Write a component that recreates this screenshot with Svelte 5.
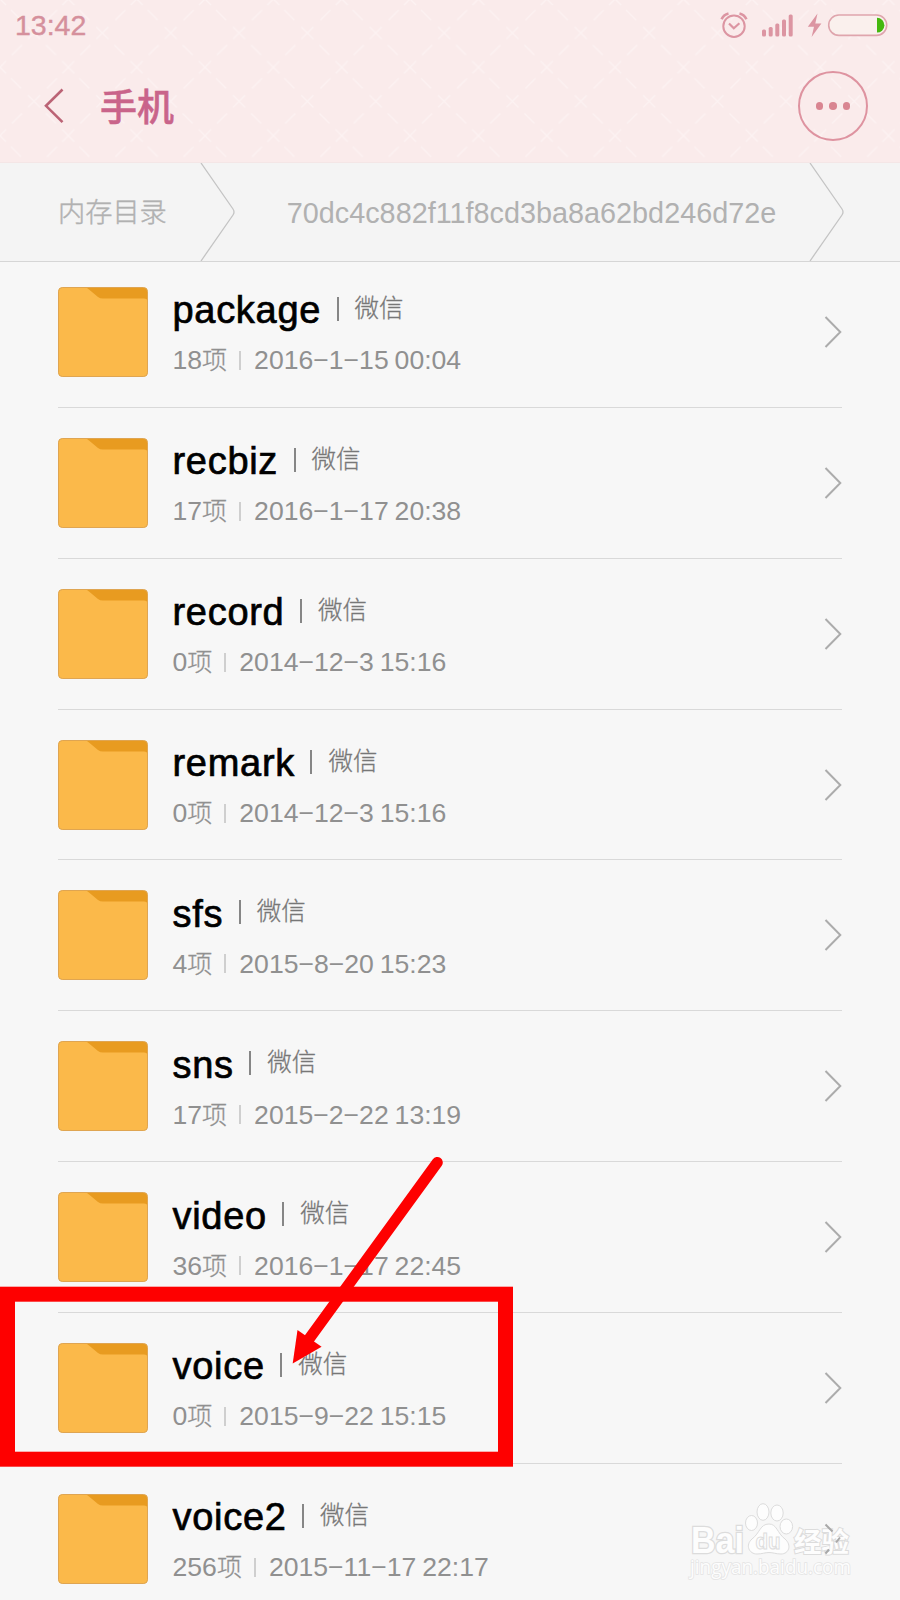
<script lang="ts">
  type Folder = { name: string; count: number; date: string };

  const app = '微信';
  const path = ['内存目录', '70dc4c882f11f8cd3ba8a62bd246d72e'];

  const folders: Folder[] = [
    { name: 'package', count: 18, date: '2016−1−15 00:04' },
    { name: 'recbiz', count: 17, date: '2016−1−17 20:38' },
    { name: 'record', count: 0, date: '2014−12−3 15:16' },
    { name: 'remark', count: 0, date: '2014−12−3 15:16' },
    { name: 'sfs', count: 4, date: '2015−8−20 15:23' },
    { name: 'sns', count: 17, date: '2015−2−22 13:19' },
    { name: 'video', count: 36, date: '2016−1−17 22:45' },
    { name: 'voice', count: 0, date: '2015−9−22 15:15' },
    { name: 'voice2', count: 256, date: '2015−11−17 22:17' },
  ];
</script>

<div class="screen">
  <header class="top">
    <svg class="lattice" width="900" height="162" aria-hidden="true">
      <defs>
        <pattern id="lattice" width="68.35" height="68.35" y="-1" patternUnits="userSpaceOnUse">
          <path
            d="M0 0l6 6M11 11l10 10M28 28l12 12M46 46l10 10M62 62l6.35 6.35M68.35 0l-6 6M57 11L47 21M40 28L28 40M22 46L12 56M6 62l-6 6.35"
            stroke="#fcf2f2" stroke-width="1.3" fill="none"
          />
        </pattern>
      </defs>
      <rect width="900" height="162" fill="url(#lattice)" />
    </svg>

    <div class="status">
      <span class="time">13:42</span>
      <svg class="status-icons" width="170" height="30" viewBox="0 0 170 30">
        <g fill="none" stroke="#dc95a2" stroke-width="2">
          <circle cx="14" cy="16.2" r="10.7" />
          <path d="M9 13.5l4.8 4.8 5.6-5" stroke-width="2.2" />
          <path d="M1.6 9.2Q3.5 4.5 8.5 3.4M26.4 9.2Q24.5 4.5 19.5 3.4" stroke-width="2.6" />
        </g>
        <g fill="#dc95a2">
          <rect x="42" y="19.5" width="4" height="7" rx="1.5" />
          <rect x="48.7" y="17" width="4" height="9.5" rx="1.5" />
          <rect x="55.3" y="13.5" width="4" height="13" rx="1.5" />
          <rect x="62" y="9.5" width="4" height="17" rx="1.5" />
          <rect x="68.7" y="4.5" width="4" height="22" rx="1.5" />
          <path d="M97.5 3.5L87.8 16.8h6.2L91.6 27l9.8-13.5h-6.1z" />
        </g>
        <rect x="108.7" y="5" width="58" height="20.4" rx="10.2" fill="#faf0ed" stroke="#dfa5ad" stroke-width="1.6" />
        <path d="M157 7.8a7.4 7.4 0 0 1 0 14.8z" fill="#45b80e" />
      </svg>
    </div>

    <div class="title-bar">
      <svg class="back" width="22" height="36" viewBox="0 0 22 36">
        <path d="M20.5 1.5L4 17.8 20.5 34.2" fill="none" stroke="#bb6375" stroke-width="2.6" />
      </svg>
      <h1>手机</h1>
      <button class="more" aria-label="more">
        <i></i><i></i><i></i>
      </button>
    </div>
  </header>

  <nav class="crumbs">
    {#each path as part}
      <span class="crumb">{part}</span>
      <svg class="crumb-edge" width="36" height="98" viewBox="0 0 36 98">
        <path d="M1 0l32 46q2 3 0 6L1 98" fill="none" stroke="#c4c4c4" stroke-width="1.3" />
      </svg>
    {/each}
  </nav>

  <ul class="list">
    {#each folders as folder}
      <li class="row">
        <svg class="folder" width="90" height="90" viewBox="0 0 90 90">
          <rect x=".5" y=".5" width="89" height="89" rx="4" fill="#e89b20" />
          <path
            d="M.5 4.5q0-4 4-4H27q2 0 4 2l9 7.5q2 1.5 5 1.5h41q3.5 0 3.5 3v71q0 4-4 4h-81q-4 0-4-4z"
            fill="#fbb94a"
          />
          <rect x=".5" y=".5" width="89" height="89" rx="4" fill="none" stroke="#dfa552" stroke-width="1" />
        </svg>
        <div class="info">
          <div class="line">
            <span class="name">{folder.name}</span>
            <span class="bar"></span>
            <span class="app">{app}</span>
          </div>
          <div class="meta">
            <span class="count">{folder.count}<span class="unit">项</span></span>
            <span class="bar small"></span>
            <span class="date">{folder.date}</span>
          </div>
        </div>
        <svg class="arrow" width="18" height="32" viewBox="0 0 18 32">
          <path d="M1.5 1L16.3 16 1.5 31" fill="none" stroke="#acacac" stroke-width="2" />
        </svg>
      </li>
    {/each}
  </ul>

  <svg class="overlay" width="900" height="1600" viewBox="0 0 900 1600">
    <g class="watermark">
      <text x="691" y="1553" class="wm-latin" textLength="53" lengthAdjust="spacingAndGlyphs">Bai</text>
      <ellipse cx="751.5" cy="1523" rx="6" ry="7.5" />
      <ellipse cx="763" cy="1512" rx="6" ry="8.3" />
      <ellipse cx="777" cy="1513" rx="6.2" ry="8" />
      <ellipse cx="786.3" cy="1526.5" rx="6.3" ry="7.5" />
      <path d="M769 1524c-9 0-9 9-17 15-7 6-3 15 5 15 5 0 8-1.5 12-1.5s7 1.5 12 1.5c8 0 11-9 4-15-8-6-8-15-16-15z" />
      <text x="755.5" y="1549" class="wm-du" textLength="25" lengthAdjust="spacingAndGlyphs">du</text>
      <text x="794" y="1551.5" class="wm-cjk">经验</text>
      <text x="690" y="1574" class="wm-url" textLength="161" lengthAdjust="spacingAndGlyphs">jingyan.baidu.com</text>
    </g>
    <path d="M825.5 1524.5l7 7M840 1537.5l-4 5M829 1549.5l-3.5 4" fill="none" stroke="#a8a8a8" stroke-width="2" />
    <rect x="7.5" y="1294.2" width="498" height="165" fill="none" stroke="#fe0000" stroke-width="15" />
    <path d="M437.3 1162.5L309 1339" stroke="#fe0000" stroke-width="11" stroke-linecap="round" />
    <path d="M292.7 1363.5l4.8-33.5 24.1 16.7z" fill="#fe0000" />
  </svg>
</div>

<style>
  :global(body) {
    margin: 0;
    background: #f7f7f7;
  }
  .screen {
    position: relative;
    width: 900px;
    height: 1600px;
    overflow: hidden;
    background: #f7f7f7;
    font-family: 'Liberation Sans', 'Noto Sans CJK SC', sans-serif;
  }
  .top {
    position: relative;
    height: 163px;
    background: #faebeb;
    border-bottom: 1px solid #f4e6e6;
    box-sizing: border-box;
  }
  .lattice {
    position: absolute;
    inset: 0;
  }
  .status {
    position: relative;
    display: flex;
    justify-content: space-between;
    height: 50px;
    padding: 0 10.5px 0 15px;
  }
  .time {
    font-size: 28.5px;
    line-height: 51px;
    color: #d5909c;
    -webkit-text-stroke: 0.4px #d5909c;
  }
  .status-icons {
    margin-top: 10px;
  }
  .title-bar {
    position: relative;
    display: flex;
    align-items: center;
    height: 112px;
    padding: 0 32px 0 42px;
  }
  h1 {
    margin: 0 auto 0 36px;
    padding-top: 5px;
    font-size: 37px;
    font-weight: 500;
    line-height: 50px;
    color: #c9648a;
    -webkit-text-stroke: 0.5px #c9648a;
  }
  .more {
    display: flex;
    align-items: center;
    justify-content: center;
    gap: 6px;
    width: 70px;
    height: 70px;
    box-sizing: border-box;
    padding: 0;
    border: 2px solid #de93a0;
    border-radius: 50%;
    background: none;
  }
  .more i {
    width: 7.5px;
    height: 7.5px;
    border-radius: 50%;
    background: #d98591;
  }
  .crumbs {
    display: flex;
    align-items: center;
    height: 98px;
    border-bottom: 1px solid #d6d6d6;
    background: #f4f4f4;
    color: #b1b1b1;
  }
  .crumb {
    font-size: 28.8px;
    line-height: 40px;
    padding: 2px 33px 0 51px;
  }
  .crumb:first-child {
    font-size: 27.2px;
    font-weight: 300;
    padding: 2px 33px 0 58px;
    -webkit-text-stroke: 0.4px #b1b1b1;
  }
  .crumb-edge {
    flex-shrink: 0;
  }
  .list {
    margin: -5px 0 0;
    padding: 0 58px;
    list-style: none;
  }
  .row {
    display: flex;
    align-items: center;
    box-sizing: border-box;
    height: 150.86px;
    border-bottom: 1px solid #d9d9d9;
  }
  .folder {
    flex-shrink: 0;
    margin-right: 24.5px;
  }
  .info {
    flex: 1;
    padding-top: 8px;
  }
  .line,
  .meta {
    display: flex;
    align-items: center;
    white-space: nowrap;
  }
  .line {
    height: 50px;
  }
  .name {
    font-size: 38px;
    line-height: 50px;
    letter-spacing: 0.7px;
    color: #000;
    -webkit-text-stroke: 0.7px #000;
  }
  .bar {
    width: 2px;
    height: 24px;
    margin: 0 16px 3px 15.5px;
    background: #868686;
  }
  .app {
    font-size: 24.5px;
    font-weight: 300;
    line-height: 46px;
    margin-bottom: 3px;
    color: #777;
    -webkit-text-stroke: 0.3px #777;
  }
  .meta {
    height: 51px;
    font-size: 26.6px;
    line-height: 51px;
    color: #909090;
  }
  .count {
    display: flex;
  }
  .unit {
    font-size: 25px;
    font-weight: 300;
    line-height: 50px;
    -webkit-text-stroke: 0.3px #909090;
  }
  .bar.small {
    width: 2px;
    height: 19px;
    margin: 0 13px 1px 12px;
    background: #cfcfcf;
  }
  .date {
    word-spacing: -1.5px;
  }
  .arrow {
    flex-shrink: 0;
  }
  .row:last-child .arrow {
    visibility: hidden;
  }
  .overlay {
    position: absolute;
    inset: 0;
  }
  .watermark {
    fill: #fdfdfd;
    stroke: #dcdcdc;
    stroke-width: 1px;
  }
  .wm-latin {
    font: bold 36px 'Liberation Sans', sans-serif;
    stroke-width: 2.5px;
    paint-order: stroke;
  }
  .wm-du {
    font: bold 22px 'Liberation Sans', sans-serif;
  }
  .wm-cjk {
    font: bold 27.5px 'Noto Sans CJK SC', sans-serif;
    stroke-width: 2px;
    paint-order: stroke;
  }
  .wm-url {
    font: 20px 'Open Sans', sans-serif;
    stroke: #e4e4e4;
    stroke-width: 1.6px;
    paint-order: stroke;
  }
</style>
